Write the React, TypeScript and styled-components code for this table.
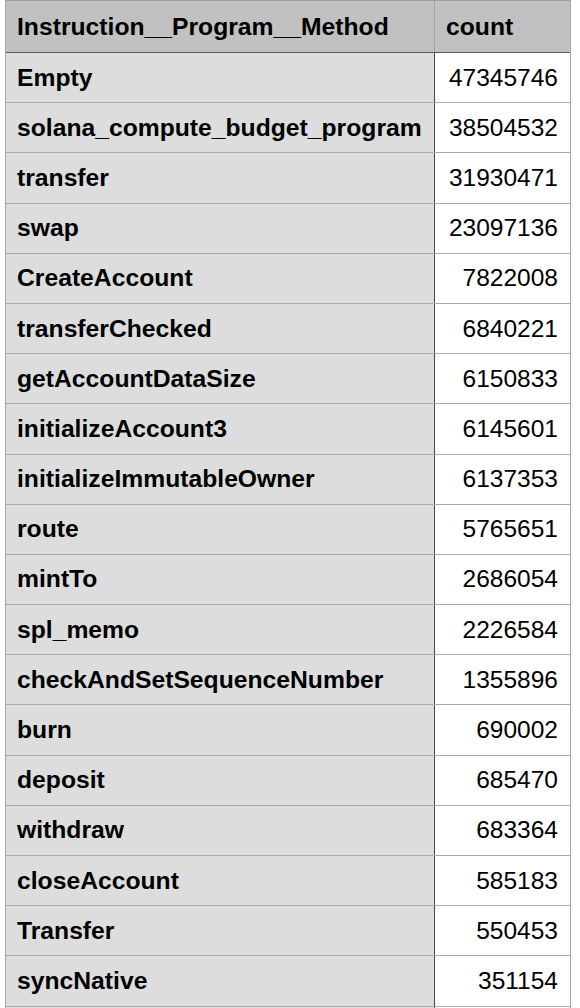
import React from "react"
import styled, {createGlobalStyle} from "styled-components"

const GlobalStyle = createGlobalStyle`
  body {
    margin: 0;
    background: #ffffff;
    font-family: "Liberation Sans", Arial, Helvetica, sans-serif;
    color: #000;
  }
`;

const Page = styled.div`
  padding: 0 9px 0 5px;
  height: 1008px;
  overflow: hidden;
`;

const Table = styled.div`
  width: 566px;
  border-top: 1px solid #9e9e9e;
  border-left: 1px solid #a6a6a6;
  border-right: 1px solid #a6a6a6;
  box-sizing: border-box;
`;

const HeaderRow = styled.div`
  display: grid;
  grid-template-columns: 429px 1fr;
  height: 51px;
  background: #c0c1c0;
  border-bottom: 1px solid #5a5a5a;
`;

const HeaderCell = styled.div<{ $divider?: boolean }>`
  display: flex;
  align-items: center;
  padding: 0 11px;
  font-size: 24.7px;
  font-weight: bold;
  border-right: ${p => p.$divider ? "1px solid #a3a3a3" : "none"};
`;

const Row = styled.div`
  display: grid;
  grid-template-columns: 429px 1fr;
  height: 50.2px;
  box-sizing: border-box;
  border-bottom: 1px solid #a9a9a9;
`;

const NameCell = styled.div`
  display: flex;
  align-items: center;
  padding: 0 11px;
  background: #dddddd;
  border-right: 1px solid #4a4a4a;
  font-size: 24.7px;
  font-weight: bold;
  white-space: nowrap;
`;

const CountCell = styled.div`
  display: flex;
  align-items: center;
  justify-content: flex-end;
  padding: 0 12px;
  background: #ffffff;
  font-size: 24.5px;
`;

const rows: [string, string][] = [
    ["Empty", "47345746"],
    ["solana_compute_budget_program", "38504532"],
    ["transfer", "31930471"],
    ["swap", "23097136"],
    ["CreateAccount", "7822008"],
    ["transferChecked", "6840221"],
    ["getAccountDataSize", "6150833"],
    ["initializeAccount3", "6145601"],
    ["initializeImmutableOwner", "6137353"],
    ["route", "5765651"],
    ["mintTo", "2686054"],
    ["spl_memo", "2226584"],
    ["checkAndSetSequenceNumber", "1355896"],
    ["burn", "690002"],
    ["deposit", "685470"],
    ["withdraw", "683364"],
    ["closeAccount", "585183"],
    ["Transfer", "550453"],
    ["syncNative", "351154"],
];

export default function App() {
    return (
        <Page>
            <GlobalStyle/>
            <Table>
                <HeaderRow>
                    <HeaderCell $divider>Instruction__Program__Method</HeaderCell>
                    <HeaderCell>count</HeaderCell>
                </HeaderRow>
                {rows.map(([name, count]) => (
                    <Row key={name}>
                        <NameCell>{name}</NameCell>
                        <CountCell>{count}</CountCell>
                    </Row>
                ))}
                {/* next row continues past the bottom edge */}
                <Row>
                    <NameCell/>
                    <CountCell/>
                </Row>
            </Table>
        </Page>
    )
}
